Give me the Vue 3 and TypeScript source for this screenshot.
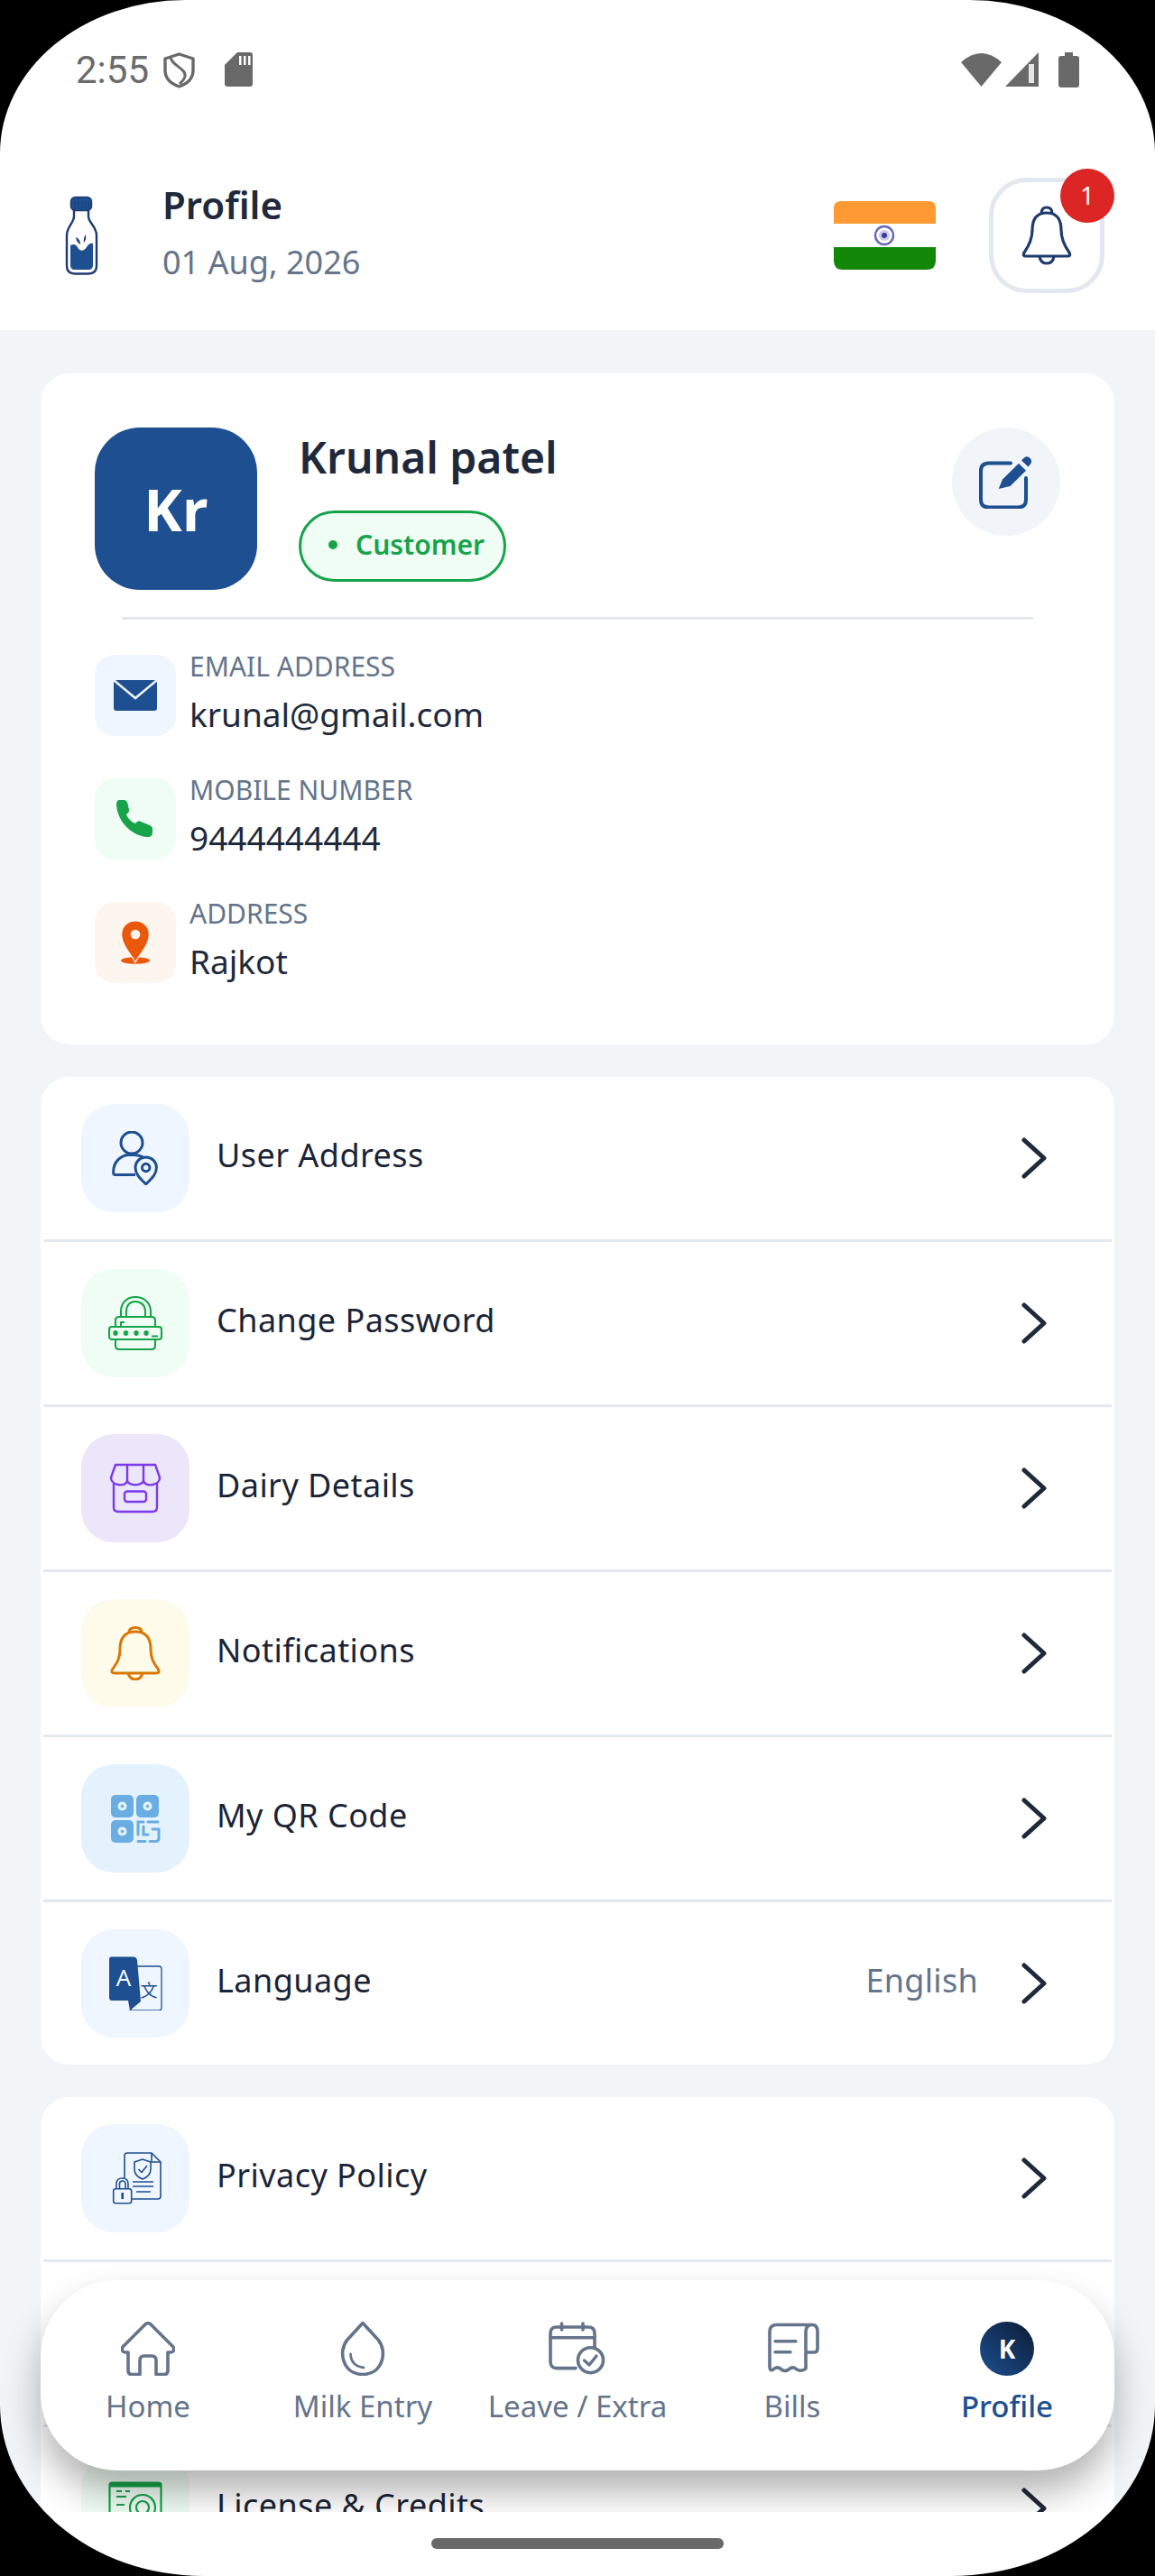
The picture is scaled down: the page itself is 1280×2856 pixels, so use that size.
<template>
  <div class="screen">
    <header class="top">
      <div class="status">
        <span class="time">2:55</span>
        <svg class="st-shield" width="35" height="40" viewBox="0 0 35 40" fill="none" stroke="#696969" stroke-width="3.4" stroke-linejoin="round">
          <path d="M17.5 2 L33 7 V20 C33 29 26 35 17.5 38 C9 35 2 29 2 20 V7 Z" />
          <path d="M8 5 C8 14 26 18 24 27 C23 31 20 33 18 35" stroke-width="3" />
        </svg>
        <svg class="st-sd" width="31" height="38" viewBox="0 0 31 38">
          <path d="M14 0 H28 Q31 0 31 3 V35 Q31 38 28 38 H3 Q0 38 0 35 V14 Z" fill="#696969" />
          <path d="M16 4 H18.5 V14 H16 Z M21 4 H23.5 V14 H21 Z M26 4 H28.5 V14 H26 Z" fill="#fff" />
        </svg>
        <span class="spacer"></span>
        <div class="st-right">
          <svg width="45" height="38" viewBox="0 0 45 38">
            <path d="M0 11 Q22.500 -9 45 11 L22.500 38 Z" fill="#696969" />
          </svg>
          <svg width="37" height="38" viewBox="0 0 37 38">
            <path d="M37 0 V38 H0 Z" fill="#696969" />
            <path d="M26 13 H32 V34 H26 Z" fill="#e6e6e6" />
          </svg>
          <svg width="23" height="39" viewBox="0 0 23 39">
            <path d="M7 0 H16 V4 H20 Q23 4 23 7 V36 Q23 39 20 39 H3 Q0 39 0 36 V7 Q0 4 3 4 H7 Z" fill="#696969" />
          </svg>
        </div>
      </div>
      <div class="appbar">
        <svg class="bottle" width="60" height="100" viewBox="0 0 60 100" fill="none">
          <path d="M22 22 V29 C22 36 14 40 14 50 V84 C14 90 18 92.500 23 92.500 H38 C43 92.500 47 90 47 84 V50 C47 40 38 36 38 29 V22" stroke="#1e3a6e" stroke-width="2.400" />
          <path d="M18 61 C22 59 24 60 26 63 C28 68 33 68 36 63 C38 59 41 58 43 59 V83 C43 86 41 88 38 88 H23 C20 88 18 86 18 83 Z" fill="#1e4f91" />
          <rect x="18.500" y="7.500" width="23" height="15" rx="5" fill="#1e4f91" stroke="#1e3a6e" stroke-width="1.500" />
          <path d="M23 12 V20 M27 12 V20 M31 12 V20 M35 12 V20 M38.500 12 V20" stroke="#173d73" stroke-width="1" />
          <path d="M24 52 Q29 54 29 60 Q25 58 24 52 Z" fill="#1e3a6e" />
          <path d="M35 49 Q36 54 33 58 Q32 53 35 49 Z" fill="#1e3a6e" />
        </svg>
        <div class="titles">
          <div class="title">Profile</div>
          <div class="date">01 Aug, 2026</div>
        </div>
        <span class="spacer"></span>
        <svg class="flag" width="113" height="76" viewBox="0 0 113 76">
          <path d="M8 0 H105 Q113 0 113 8 V25 H0 V8 Q0 0 8 0 Z" fill="#ff9933" />
          <path d="M0 51 H113 V66 Q113 76 103 76 H10 Q0 76 0 66 Z" fill="#138808" />
          <circle cx="56" cy="38" r="10" fill="none" stroke="#6a6ab8" stroke-width="2.500" />
          <circle cx="56" cy="38" r="6" fill="#c9c9ec" />
          <circle cx="56" cy="38" r="3" fill="#3a3aa4" />
        </svg>
        <div class="bell-btn">
          <svg width="60" height="68" viewBox="0 0 60 68" fill="none" stroke="#1e3a6e" stroke-width="3.200" stroke-linejoin="round">
            <path d="M30 9 C18 9 14 17 14 28 C14 39 10 46 5 53 Q3 57 7 57 H53 Q57 57 55 53 C50 46 46 39 46 28 C46 17 42 9 30 9 Z" />
            <path d="M24 10 Q24 3 30 3 Q36 3 36 10" />
            <path d="M22 57 Q23 65 30 65 Q37 65 38 57" />
          </svg>
          <span class="bell-count">1</span>
        </div>
      </div>
    </header>

    <main class="content">
      <section class="card profile">
        <div class="profile-top">
          <div class="avatar">Kr</div>
          <div class="who">
            <div class="name">Krunal patel</div>
            <div class="badge"><i class="dot"></i>Customer</div>
          </div>
          <span class="spacer"></span>
          <div class="edit">
            <svg width="60" height="60" viewBox="0 0 60 60" fill="none">
              <path d="M35 9.500 H11 Q2 9.500 2 18 V50 Q2 58.500 11 58.500 H43 Q52 58.500 52 50 V26" stroke="#1e4f91" stroke-width="4" stroke-linecap="round" />
              <path d="M21.700 38 L26 27.500 L44 9.700 L52 17.700 L34.500 35 Z" fill="#1e4f91" />
              <path d="M47 6.500 L50 3.500 Q53.500 1 56.500 4 Q59.500 7 57 10.500 L54.500 13.500 Z" fill="#1e4f91" />
            </svg>
          </div>
        </div>
        <div class="divider"></div>
        <div class="info">
          <div class="info-row">
            <div class="info-icon blue">
              <svg width="60" height="60" viewBox="0 0 60 60">
                <path d="M6 13 H54 V44 Q54 47 51 47 H9 Q6 47 6 44 Z" fill="#1e4f91" />
                <path d="M6 13 L30 33 L54 13" fill="none" stroke="#eff6ff" stroke-width="2.500" />
              </svg>
            </div>
            <div class="info-text">
              <div class="info-label">EMAIL ADDRESS</div>
              <div class="info-value">krunal@gmail.com</div>
            </div>
          </div>
          <div class="info-row">
            <div class="info-icon green">
              <svg width="60" height="60" viewBox="0 0 60 60">
                <path d="M13 9 h4 c3 0 4 2 4.500 4 l1.500 7 c.5 2 -1 3 -3 5 c2 5 6 8.500 10 10 c2 -2 3.500 -3 5 -2.500 l11 4.500 c2 1 3 2 3 4 v4 c0 3 -2 5 -5 5 c-18 -1 -34 -17 -35 -36 c0 -3 1 -5 4 -5z" fill="#16a34a" />
              </svg>
            </div>
            <div class="info-text">
              <div class="info-label">MOBILE NUMBER</div>
              <div class="info-value">9444444444</div>
            </div>
          </div>
          <div class="info-row">
            <div class="info-icon orange">
              <svg width="60" height="60" viewBox="0 0 60 60">
                <ellipse cx="30" cy="50" rx="16" ry="3.800" fill="#ea580c" />
                <path d="M30 52 C26 44 14.700 33 14.700 21 C14.700 12 21.500 6 30 6 C38.500 6 45.300 12 45.300 21 C45.300 33 34 44 30 52 Z" fill="#ea580c" stroke="#fdf6ef" stroke-width="1.200" />
                <circle cx="30" cy="21" r="5.300" fill="#fdf6ef" />
              </svg>
            </div>
            <div class="info-text">
              <div class="info-label">ADDRESS</div>
              <div class="info-value">Rajkot</div>
            </div>
          </div>
        </div>
      </section>

      <section class="card menu" v-for="(group, g) in groups" :key="g">
        <template v-for="row in group" :key="row.icon">
          <div class="row">
            <template v-if="row.label">
              <div class="row-icon" :class="row.tone">
                <svg v-if="row.icon === 'user'" width="60" height="60" viewBox="0 0 60 60" fill="none" stroke="#1e4f91" stroke-width="3">
                  <circle cx="26" cy="13" r="12" />
                  <path d="M5.700 48.500 V45 C5.700 34 14 26.500 23 26.500 H29 C33 26.500 37 28 40 30 M5.700 48.500 H30" />
                  <path d="M41.700 59 C37 54 30 49 30 40.500 C30 34 35 29 41.700 29 C48.400 29 53.400 34 53.400 40.500 C53.400 49 46.400 54 41.700 59 Z" />
                  <circle cx="41.700" cy="40.500" r="4.200" />
                </svg>
                <svg v-else-if="row.icon === 'lock'" width="60" height="60" viewBox="0 0 60 60" fill="none" stroke="#16a34a" stroke-width="2.100">
                  <path d="M14 23 V17 C14 7 21 1 30 1 C39 1 47 7 47 17 V23" />
                  <path d="M20 23 V17 C20 10 24 6 30 6 C36 6 41 10 41 17 V23" />
                  <path d="M8 34 V27 Q8 23 12 23 H48 Q52 23 52 27 V34 M8 48 V55 Q8 59 12 59 H48 Q52 59 52 55 V48" />
                  <rect x="1" y="34" width="58" height="14" rx="3" />
                  <path d="M14 33 V29 H18" />
                  <path d="M8 38 V44 M5.500 39.500 L10.500 42.500 M10.500 39.500 L5.500 42.500 M19.500 38 V44 M17 39.500 L22 42.500 M22 39.500 L17 42.500 M31 38 V44 M28.500 39.500 L33.500 42.500 M33.500 39.500 L28.500 42.500 M42 38 V44 M39.500 39.500 L44.500 42.500 M44.500 39.500 L39.500 42.500 M48 44.500 H55" stroke-width="2.200" />
                </svg>
                <svg v-else-if="row.icon === 'store'" width="60" height="60" viewBox="0 0 60 60" fill="none" stroke="#7c3aed" stroke-width="2.400" stroke-linejoin="round">
                  <path d="M8 4 H52 L57 18 C57 28 39 29 39 21 C39 28 21 28 21 21 C21 29 3 28 3 18 Z" />
                  <path d="M21 4 V21 M39 4 V21" />
                  <path d="M6 25 V51 Q6 56 11 56 H49 Q54 56 54 51 V25" />
                  <rect x="18" y="33.500" width="24" height="11.500" rx="3" />
                </svg>
                <svg v-else-if="row.icon === 'bell'" width="60" height="60" viewBox="0 0 60 60" fill="none" stroke="#d97706" stroke-width="3" stroke-linejoin="round">
                  <path d="M30 6 C17 6 13 15 13 25 C13 37 9 41 4.500 48 Q2.500 52 7 52 H53 Q57.500 52 55.500 48 C51 41 47 37 47 25 C47 15 43 6 30 6 Z" />
                  <path d="M23 7 Q23 1.500 30 1.500 Q37 1.500 37 7" />
                  <path d="M22 52 Q24 59 30 59 Q36 59 38 52" />
                </svg>
                <svg v-else-if="row.icon === 'qr'" width="60" height="60" viewBox="0 0 60 60">
                  <rect x="3" y="4" width="25" height="25" rx="5" fill="#69ade2" />
                  <rect x="31" y="4" width="25" height="25" rx="5" fill="#69ade2" />
                  <rect x="3" y="32" width="25" height="25" rx="5" fill="#69ade2" />
                  <circle cx="15.500" cy="16.500" r="5" fill="#e3f2fd" />
                  <circle cx="43.500" cy="16.500" r="5" fill="#e3f2fd" />
                  <circle cx="15.500" cy="44.500" r="5" fill="#e3f2fd" />
                  <circle cx="15.500" cy="16.500" r="1.800" fill="#69ade2" />
                  <circle cx="43.500" cy="16.500" r="1.800" fill="#69ade2" />
                  <circle cx="15.500" cy="44.500" r="1.800" fill="#69ade2" />
                  <path d="M33 48 V34 H39 M44 34 H55 M33 55.500 H41 M46 55.500 H53 Q56 55.500 56 52 V42 H49 M39 39 V48 H44" fill="none" stroke="#69ade2" stroke-width="3" stroke-linecap="round" />
                </svg>
                <svg v-else-if="row.icon === 'lang'" width="60" height="60" viewBox="0 0 60 60">
                  <path d="M31 11 H56 Q59 11 59 14 V57 Q59 60 56 60 H24 L31 50 Z" fill="#eff6ff" stroke="#1e4f91" stroke-width="1.300" />
                  <path d="M3 .5 H28 Q31 .5 32 4 L36 50 L24 60 L22 49 H4 Q1 49 1 46 V3 Q1 .5 3 .5 Z" fill="#1e4f91" />
                  <text x="17" y="33" class="lang-a">A</text>
                  <text x="45" y="45" class="lang-zh">文</text>
                </svg>
                <svg v-else-if="row.icon === 'privacy'" width="60" height="60" viewBox="0 0 60 60" fill="none" stroke="#1e4f91" stroke-width="1.600" stroke-linejoin="round">
                  <path d="M18 30 V5 Q18 2 21 2 H48 L58 12 V50 Q58 53 55 53 H26" />
                  <path d="M48 2 V12 H58" />
                  <path d="M38 9 L47 12 V20 C47 25 43 29 38 31 C33 29 29 25 29 20 V12 Z" />
                  <path d="M33.500 20 L37 23.500 L43 16" />
                  <path d="M27 34 H50 M27 39 H50 M31 45 H47" />
                  <rect x="5.700" y="41.700" width="20" height="16" rx="2.500" fill="#eff6ff" />
                  <path d="M9 41.700 V36 C9 32 12 30 15.700 30 C19.400 30 22 32 22 36 V41.700 M12.500 41.700 V36 C12.500 34 14 33 15.700 33 C17.400 33 19 34 19 36 V41.700" />
                  <path d="M15.700 46 V53" stroke-width="2.600" />
                </svg>
                <svg v-else width="60" height="60" viewBox="0 0 60 60" fill="none" stroke="#16a34a" stroke-width="2.200">
                  <rect x="1.500" y="1.500" width="57" height="56" rx="3" />
                  <path d="M1.500 4 H58.500" stroke-width="5" />
                  <path d="M9 11 H15 M19 11 H24 M9 17 H20 M9 26 H18" />
                  <circle cx="38" cy="29" r="14" />
                  <circle cx="38" cy="29" r="7" />
                </svg>
              </div>
              <span class="row-label">{{ row.label }}</span>
              <span class="spacer"></span>
              <span v-if="row.value" class="row-value">{{ row.value }}</span>
              <svg class="chev" width="28" height="46" viewBox="0 0 28 46" fill="none" stroke="#1e293b" stroke-width="5" stroke-linecap="round" stroke-linejoin="round">
                <path d="M3 3 L25 23 L3 43" />
              </svg>
            </template>
          </div>
        </template>
      </section>
    </main>

    <nav class="nav">
      <div class="nav-item">
        <svg width="60" height="60" viewBox="0 0 60 60" fill="none" stroke="#64748b" stroke-width="3.600" stroke-linejoin="round">
          <path d="M8 34 V54 Q8 58.500 12 58.500 H21 V43 Q21 38 26 38 H34 Q39 38 39 43 V58.500 H48 Q52 58.500 52 54 V34 H55 Q60 34 58 28 L33 3 Q30 .5 27 3 L2 28 Q0 34 5 34 Z" />
        </svg>
        <span>Home</span>
      </div>
      <div class="nav-item">
        <svg width="60" height="60" viewBox="0 0 60 60" fill="none" stroke="#64748b" stroke-width="3.600" stroke-linecap="round" stroke-linejoin="round">
          <path d="M30 1.500 L13 20 C2 33 8 58.500 30 58.500 C52 58.500 58 33 47 20 Z" />
          <path d="M16.500 36 Q17 49 31 51" stroke-width="2.800" />
        </svg>
        <span>Milk Entry</span>
      </div>
      <div class="nav-item">
        <svg width="64" height="60" viewBox="0 0 64 60" fill="none" stroke="#64748b" stroke-width="3.600" stroke-linecap="round" stroke-linejoin="round">
          <path d="M30 51.600 H9 Q2 51.600 2 44 V13 Q2 6 9 6 H44 Q51 6 51 13 V28" />
          <path d="M2 17.700 H51 M14.500 2 V9 M38 2 V9" />
          <circle cx="46.500" cy="42.700" r="14" />
          <path d="M39.500 43 L45 48 L53 38" stroke-width="3.400" />
        </svg>
        <span>Leave / Extra</span>
      </div>
      <div class="nav-item">
        <svg width="60" height="60" viewBox="0 0 60 60" fill="none" stroke="#64748b" stroke-width="3.600" stroke-linecap="round" stroke-linejoin="round">
          <path d="M52 3.500 H13 Q5 3.500 5 11 V50 Q5 55.500 9 53 Q13 49 18 53 Q22 56 26 53 Q31 49 35 53 Q41 56 45 52 V11 Q45 3.500 52 3.500 Q58 3.500 58 11 V30 Q58 34 54 34 H45" />
          <path d="M11 21.700 H34 M11 33.700 H28" stroke-width="3.400" />
        </svg>
        <span>Bills</span>
      </div>
      <div class="nav-item active">
        <div class="nav-avatar">K</div>
        <span>Profile</span>
      </div>
    </nav>

    <footer class="gesture"><i class="home-bar"></i></footer>
    <div class="frame"></div>
  </div>
</template>

<script setup lang="ts">
type Row = { icon: string; label: string; tone: string; value?: string }

const groups: Row[][] = [
  [
    { icon: 'user', label: 'User Address', tone: 'blue' },
    { icon: 'lock', label: 'Change Password', tone: 'green' },
    { icon: 'store', label: 'Dairy Details', tone: 'purple' },
    { icon: 'bell', label: 'Notifications', tone: 'yellow' },
    { icon: 'qr', label: 'My QR Code', tone: 'sky' },
    { icon: 'lang', label: 'Language', tone: 'blue', value: 'English' },
  ],
  [
    { icon: 'privacy', label: 'Privacy Policy', tone: 'blue' },
    { icon: 'hidden', label: '', tone: '' },
    { icon: 'license', label: 'License & Credits', tone: 'green' },
  ],
]
</script>

<style>
html,
body {
  margin: 0;
  background: #000;
}
</style>

<style scoped>
.screen {
  position: relative;
  width: 1280px;
  height: 2856px;
  overflow: hidden;
  background: #fff;
  font-family: "Noto Sans", sans-serif;
  color: #1e293b;
}

.spacer {
  flex: 1;
}

.top {
  height: 366px;
  box-sizing: border-box;
  background: #fff;
}

.status {
  height: 155px;
  box-sizing: border-box;
  padding: 58px 84px 0 84px;
  display: flex;
  align-items: flex-start;
}

.time {
  font-family: Roboto, sans-serif;
  font-size: 42px;
  line-height: 40px;
  color: #6b6b6b;
}

.st-shield {
  margin-left: 16px;
}

.st-sd {
  margin-left: 33px;
}

.st-right {
  display: flex;
  gap: 4px;
  align-items: flex-start;
}

.st-right svg:last-child {
  margin-left: 18px;
}

.appbar {
  height: 211px;
  box-sizing: border-box;
  padding: 0 56px 0 60px;
  display: flex;
  align-items: center;
}

.titles {
  margin-left: 60px;
  margin-bottom: 9px;
}

.title {
  font-size: 42px;
  line-height: 57px;
  font-weight: 600;
}

.date {
  margin-top: 11px;
  font-size: 36px;
  line-height: 49px;
  color: #64748b;
}

.flag {
  margin-right: 59px;
}

.bell-btn {
  position: relative;
  width: 128px;
  height: 128px;
  box-sizing: border-box;
  border: 5px solid #e2e8f0;
  border-radius: 42px;
  display: flex;
  align-items: center;
  justify-content: center;
}

.bell-count {
  position: absolute;
  left: 74px;
  top: -15px;
  width: 60px;
  height: 60px;
  border-radius: 50%;
  background: #dc2626;
  color: #fff;
  font-size: 27px;
  line-height: 60px;
  text-align: center;
}

.content {
  height: 2419px;
  box-sizing: border-box;
  padding: 48px 45px 0;
  background: #f1f5f8;
  overflow: hidden;
  display: flex;
  flex-direction: column;
  gap: 36px;
}

.card {
  flex: none;
  background: #fff;
  border-radius: 32px;
}

.profile {
  padding: 60px 60px 68px;
}

.profile-top {
  display: flex;
}

.avatar {
  width: 180px;
  height: 180px;
  border-radius: 50px;
  background: #1e4f91;
  color: #fff;
  font-family: "Open Sans", sans-serif;
  font-size: 64px;
  font-weight: 700;
  display: flex;
  align-items: center;
  justify-content: center;
}

.who {
  margin-left: 46px;
}

.name {
  font-size: 48px;
  line-height: 66px;
  font-weight: 600;
}

.badge {
  margin-top: 26px;
  width: 230px;
  height: 79px;
  box-sizing: border-box;
  padding: 0 0 4px 30px;
  border: 3px solid #16a34a;
  border-radius: 40px;
  background: #f0fdf4;
  color: #16a34a;
  font-size: 30px;
  font-weight: 600;
  display: flex;
  align-items: center;
}

.dot {
  width: 10px;
  height: 10px;
  border-radius: 50%;
  background: #16a34a;
  margin-right: 20px;
}

.edit {
  width: 120px;
  height: 120px;
  border-radius: 50%;
  background: #f1f5f9;
  display: flex;
  align-items: center;
  justify-content: center;
}

.divider {
  height: 3px;
  margin: 30px 30px 39px;
  background: #e2e8f0;
}

.info {
  display: flex;
  flex-direction: column;
  gap: 47px;
}

.info-row {
  height: 90px;
  display: flex;
  gap: 15px;
}

.info-text {
  margin-top: -7px;
}

.info-icon {
  width: 90px;
  height: 90px;
  border-radius: 22px;
  display: flex;
  align-items: center;
  justify-content: center;
}

.info-label {
  font-size: 30px;
  line-height: 40px;
  color: #64748b;
}

.info-value {
  margin-top: 8px;
  font-size: 37px;
  line-height: 50px;
}

.menu {
  padding: 0 3px;
}

.row {
  height: 180px;
  padding: 0 72px 0 42px;
  display: flex;
  align-items: center;
  border-bottom: 3px solid #e2e8f0;
}

.row:last-child {
  border-bottom: 0;
}

.row-icon {
  width: 120px;
  height: 120px;
  flex: none;
  border-radius: 36px;
  display: flex;
  align-items: center;
  justify-content: center;
}

.row-label {
  margin: 0 0 7px 30px;
  font-size: 36px;
  letter-spacing: 0.45px;
  color: #1a2436;
}

.row-value {
  margin: 0 48px 7px 0;
  font-size: 36px;
  letter-spacing: 0.3px;
  color: #64748b;
}

.chev {
  flex: none;
}

.blue {
  background: #eff6ff;
}

.green {
  background: #f0fdf4;
}

.orange {
  background: #fdf6ef;
}

.purple {
  background: #ebe6fa;
}

.yellow {
  background: #fffbeb;
}

.sky {
  background: #e3f2fd;
}

.lang-a {
  font-family: "Open Sans", sans-serif;
  font-size: 26px;
  fill: #fff;
  text-anchor: middle;
}

.lang-zh {
  font-family: "Noto Sans CJK SC", sans-serif;
  font-size: 19px;
  fill: #1e4f91;
  text-anchor: middle;
}

.nav {
  position: absolute;
  left: 45px;
  top: 2528px;
  width: 1190px;
  height: 211px;
  box-sizing: border-box;
  padding-top: 46px;
  border-radius: 85px;
  background: #fff;
  box-shadow: 0 24px 40px rgba(0, 0, 0, 0.3);
  display: grid;
  grid-template-columns: repeat(5, 1fr);
  align-items: start;
}

.nav-item {
  display: flex;
  flex-direction: column;
  align-items: center;
  gap: 12px;
  font-size: 33px;
  line-height: 44px;
  color: #64748b;
}

.nav-item.active {
  color: #1e4f91;
  font-weight: 500;
}

.nav-avatar {
  width: 60px;
  height: 60px;
  border-radius: 50%;
  background: linear-gradient(45deg, #1e4f91, #0c1b33);
  color: #fff;
  font-size: 28px;
  font-weight: 700;
  line-height: 60px;
  text-align: center;
}

.gesture {
  position: relative;
  height: 71px;
  background: #fff;
  display: flex;
  justify-content: center;
  padding-top: 29px;
  box-sizing: border-box;
}

.home-bar {
  width: 324px;
  height: 12px;
  border-radius: 6px;
  background: #696969;
}

.frame {
  position: absolute;
  inset: 0;
  pointer-events: none;
  border-radius: 205px 205px 225px 225px / 170px 170px 190px 190px;
  box-shadow: 0 0 0 300px #000;
}
</style>
